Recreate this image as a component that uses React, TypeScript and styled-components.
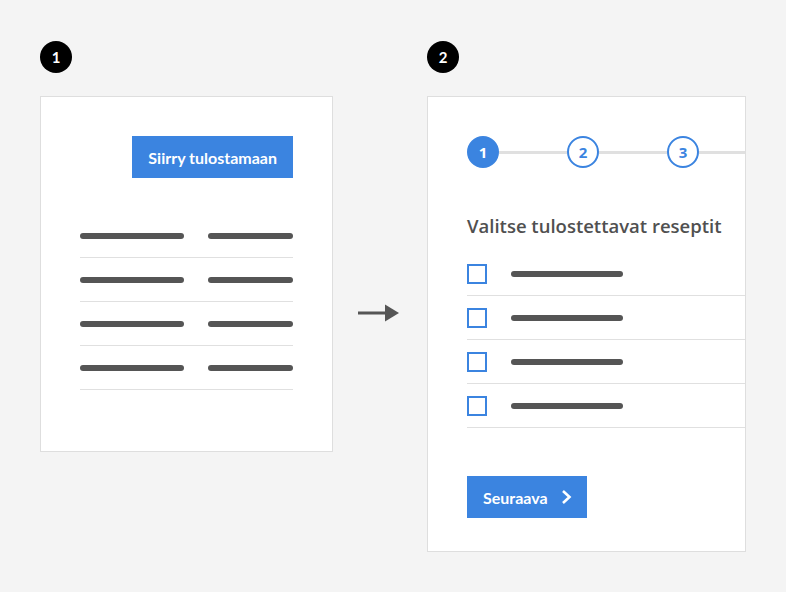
import styled, { createGlobalStyle } from "styled-components";

const GlobalStyle = createGlobalStyle`
    html, body {
        margin: 0;
        padding: 0;
        background: #f4f4f4;
    }
    body {
        font-family: Lato, "Open Sans", Arial, sans-serif;
    }
`

const BLUE = "#3b84e0"
const INK = "#555555"
const RULE = "#e0e0e0"

const Page = styled.div`
    width: 786px;
    height: 592px;
    box-sizing: border-box;
    padding: 41px 0 0 40px;
    display: flex;
    align-items: flex-start;
    overflow: hidden;
`
const Column = styled.div`
    display: flex;
    flex-direction: column;
    gap: 23px;
`
const Badge = styled.div`
    width: 32px;
    height: 32px;
    border-radius: 50%;
    background: #000;
    color: #fff;
    font-family: Lato, sans-serif;
    font-weight: 700;
    font-size: 15px;
    display: flex;
    align-items: center;
    justify-content: center;
`
const Panel = styled.div<{ $w: number; $h: number; $padRight?: number }>`
    width: ${p => p.$w}px;
    height: ${p => p.$h}px;
    box-sizing: border-box;
    background: #fff;
    border: 1px solid #dedede;
    padding: 39px ${p => p.$padRight ?? 39}px 0 39px;
    display: flex;
    flex-direction: column;
    overflow: hidden;
`
const Button = styled.button<{ $right?: boolean }>`
    align-self: ${p => p.$right ? "flex-end" : "flex-start"};
    height: 42px;
    border: none;
    border-radius: 0;
    background: ${BLUE};
    color: #fff;
    font-family: Lato, sans-serif;
    font-weight: 700;
    font-size: 16px;
    padding: 0 16px;
    display: flex;
    align-items: center;
    gap: 13px;
    cursor: pointer;
`
const Table = styled.div`
    margin-top: 36px;
    display: flex;
    flex-direction: column;
`
const Row = styled.div<{ $gap: number }>`
    height: 43px;
    border-bottom: 1px solid ${RULE};
    display: flex;
    align-items: center;
    gap: ${p => p.$gap}px;
`
const Bar = styled.div<{ $w: number }>`
    width: ${p => p.$w}px;
    height: 6px;
    border-radius: 3px;
    background: ${INK};
`
const ArrowBox = styled.div`
    margin: 263px 28px 0 25px;
    display: flex;
`
const Stepper = styled.div`
    display: flex;
    align-items: center;
`
const Step = styled.div<{ $active?: boolean }>`
    width: 32px;
    height: 32px;
    flex-shrink: 0;
    box-sizing: border-box;
    border-radius: 50%;
    border: 2px solid ${BLUE};
    background: ${p => p.$active ? BLUE : "#fff"};
    color: ${p => p.$active ? "#fff" : BLUE};
    font-family: "Open Sans", sans-serif;
    font-weight: 700;
    font-size: 15px;
    display: flex;
    align-items: center;
    justify-content: center;
`
const Connector = styled.div<{ $grow?: boolean }>`
    height: 3px;
    background: ${RULE};
    width: 68px;
    flex: ${p => p.$grow ? "1" : "none"};
`
const Heading = styled.h2`
    margin: 45px 0 0;
    font-family: "Open Sans", sans-serif;
    font-weight: 600;
    font-size: 18.5px;
    line-height: 26px;
    color: #505050;
`
const List = styled.div`
    margin-top: 13px;
    display: flex;
    flex-direction: column;
`
const Checkbox = styled.div`
    width: 20px;
    height: 20px;
    box-sizing: border-box;
    border: 2px solid ${BLUE};
    flex-shrink: 0;
`
const NextButton = styled(Button)`
    margin-top: 48px;
    padding: 0 14px 0 16px;
`

const Arrow = () => (
    <svg width="41" height="18" viewBox="0 0 41 18">
        <rect x="0" y="7.5" width="28" height="3" fill={INK} />
        <polygon points="27,0.5 41,9 27,17.5" fill={INK} />
    </svg>
)

const Chevron = () => (
    <svg width="12" height="14" viewBox="0 0 12 14">
        <polyline points="2,1 8.5,7 2,13" fill="none" stroke="#fff" strokeWidth="2.6" />
    </svg>
)

const App = () => {
    const rows = [0, 1, 2, 3]
    return (
        <Page>
            <GlobalStyle />
            <Column>
                <Badge>1</Badge>
                <Panel $w={293} $h={356}>
                    <Button $right>Siirry tulostamaan</Button>
                    <Table>
                        {rows.map(r => (
                            <Row key={r} $gap={24}>
                                <Bar $w={104} />
                                <Bar $w={85} />
                            </Row>
                        ))}
                    </Table>
                </Panel>
            </Column>

            <ArrowBox>
                <Arrow />
            </ArrowBox>

            <Column>
                <Badge>2</Badge>
                <Panel $w={319} $h={456} $padRight={0}>
                    <Stepper>
                        <Step $active>1</Step>
                        <Connector />
                        <Step>2</Step>
                        <Connector />
                        <Step>3</Step>
                        <Connector $grow />
                    </Stepper>
                    <Heading>Valitse tulostettavat reseptit</Heading>
                    <List>
                        {rows.map(r => (
                            <Row key={r} $gap={24}>
                                <Checkbox />
                                <Bar $w={112} />
                            </Row>
                        ))}
                    </List>
                    <NextButton>
                        Seuraava
                        <Chevron />
                    </NextButton>
                </Panel>
            </Column>
        </Page>
    )
}
export default App;
